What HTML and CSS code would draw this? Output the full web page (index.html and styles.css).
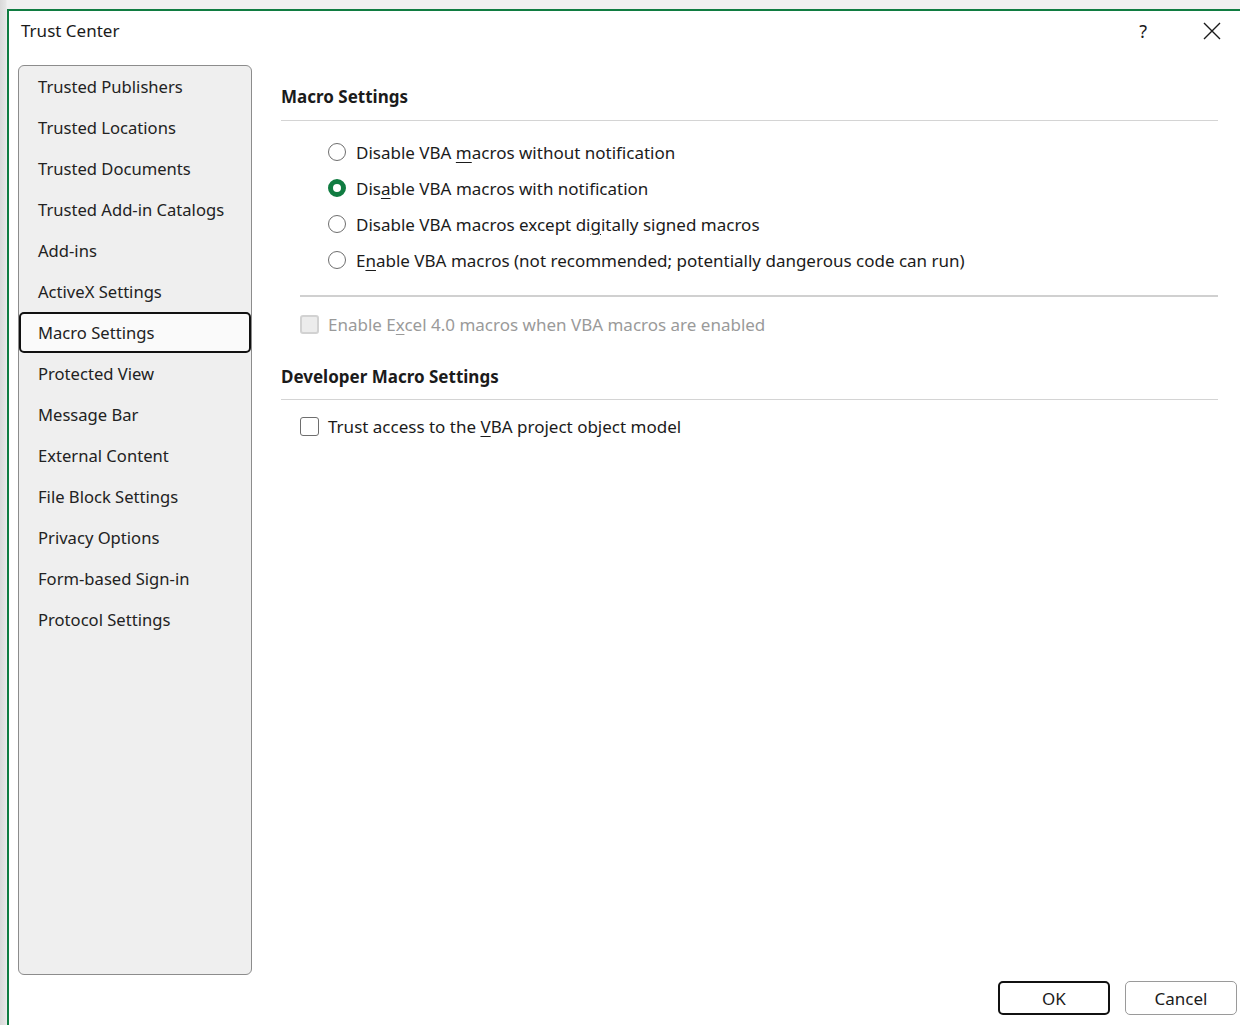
FILE: index.html
```html
<!DOCTYPE html>
<html lang="en">
<head>
    <meta charset="UTF-8">
    <title>Trust Center</title>
    <link rel="stylesheet" href="styles.css">
</head>
<body>

<div class="dialog">
    <div class="titlebar">
        <div class="title">Trust Center</div>
        <div class="title-buttons">
            <span class="help">?</span>
            <svg class="close" width="18" height="18" viewBox="0 0 18 18">
                <path d="M1 1 L17 17 M17 1 L1 17" stroke="#1a1a1a" stroke-width="1.4" fill="none"/>
            </svg>
        </div>
    </div>

    <div class="content">
        <ul class="nav">
            <li>Trusted Publishers</li>
            <li>Trusted Locations</li>
            <li>Trusted Documents</li>
            <li>Trusted Add-in Catalogs</li>
            <li>Add-ins</li>
            <li>ActiveX Settings</li>
            <li class="active">Macro Settings</li>
            <li>Protected View</li>
            <li>Message Bar</li>
            <li>External Content</li>
            <li>File Block Settings</li>
            <li>Privacy Options</li>
            <li>Form-based Sign-in</li>
            <li>Protocol Settings</li>
        </ul>

        <div class="main">
            <h3 class="section-title">Macro Settings</h3>
            <div class="radios">
                <div class="option"><span class="radio"></span><span>Disable VBA <u>m</u>acros without notification</span></div>
                <div class="option"><span class="radio checked"></span><span>Dis<u>a</u>ble VBA macros with notification</span></div>
                <div class="option"><span class="radio"></span><span>Disable VBA macros except di<u>g</u>itally signed macros</span></div>
                <div class="option"><span class="radio"></span><span>E<u>n</u>able VBA macros (not recommended; potentially dangerous code can run)</span></div>
            </div>
            <div class="divider"></div>
            <div class="check-row disabled"><span class="checkbox"></span><span>Enable E<u>x</u>cel 4.0 macros when VBA macros are enabled</span></div>

            <h3 class="section-title dev">Developer Macro Settings</h3>
            <div class="check-row trust"><span class="checkbox"></span><span>Trust access to the <u>V</u>BA project object model</span></div>
        </div>
    </div>

    <div class="footer">
        <button class="btn default">OK</button>
        <button class="btn">Cancel</button>
    </div>
</div>

</body>
</html>
```

FILE: styles.css
```css
* {
    margin: 0;
    padding: 0;
    box-sizing: border-box;
    font-family: 'Noto Sans', 'Open Sans', sans-serif;
}
body {
    width: 1240px;
    height: 1025px;
    overflow: hidden;
    background: #f0f0f0;
    background-image: linear-gradient(to right, #d9d9d9 0, #e6e6e6 6px, #f0f0f0 7px);
    color: #1b1b1b;
}
.dialog {
    margin: 9px 0 0 7px;
    height: 1016px;
    border-top: 2px solid #107c41;
    border-left: 2px solid #107c41;
    background: #fff;
    display: flex;
    flex-direction: column;
}
.titlebar {
    flex-shrink: 0;
    height: 44px;
    display: flex;
    justify-content: space-between;
    align-items: center;
    padding: 0 0 0 12px;
}
.title {
    font-size: 17px;
    margin-top: -5px;
}
.title-buttons {
    display: flex;
    align-items: center;
    margin-top: -4px;
}
.help {
    font-size: 18px;
    margin-right: 56px;
}
.close {
    margin-right: 19px;
}
.content {
    flex-shrink: 0;
    display: flex;
    height: 920px;
    padding-top: 10px;
}
.nav {
    list-style: none;
    margin-left: 9px;
    width: 234px;
    height: 910px;
    background: #efefef;
    border: 1px solid #8c8c8c;
    border-radius: 6px;
}
.nav li {
    height: 41px;
    line-height: 41px;
    padding-left: 19px;
    font-size: 16.6px;
    color: #222;
}
.nav li.active {
    background: #fafafa;
    border: 2px solid #111;
    border-radius: 5px;
    line-height: 37px;
    padding-left: 17px;
}
.main {
    flex: 1;
    margin-left: 29px;
    margin-right: 22px;
    padding-top: 20px;
}
.section-title {
    font-size: 17px;
    font-weight: bold;
    height: 36px;
    line-height: 24px;
    border-bottom: 1px solid #d4d4d4;
}
.radios {
    padding: 13px 0 0 47px;
}
.option {
    display: flex;
    align-items: center;
    height: 36px;
    font-size: 17px;
}
.radio {
    flex-shrink: 0;
    width: 18px;
    height: 18px;
    border: 1.5px solid #6e6e6e;
    border-radius: 50%;
    margin-right: 10px;
    background: #fff;
}
.radio.checked {
    border: 5px solid #107c41;
}
u {
    text-decoration-thickness: 1px;
    text-underline-offset: 3px;
}
.divider {
    margin: 17px 0 0 19px;
    height: 2px;
    background: #d0d0d0;
}
.check-row {
    display: flex;
    align-items: center;
    height: 36px;
    margin-left: 19px;
    font-size: 17px;
}
.check-row.disabled {
    margin-top: 9px;
    color: #9a9a9a;
}
.checkbox {
    flex-shrink: 0;
    width: 19px;
    height: 19px;
    border: 1.5px solid #6e6e6e;
    border-radius: 3px;
    margin-right: 9px;
    background: #fff;
}
.disabled .checkbox {
    border: 2px solid #d2d2d2;
    background: #ececec;
}
.section-title.dev {
    margin-top: 23px;
    height: 35px;
}
.check-row.trust {
    margin-top: 8px;
}
.footer {
    flex-shrink: 0;
    display: flex;
    justify-content: flex-end;
    gap: 15px;
    padding-top: 6px;
    padding-right: 3px;
}
.btn {
    width: 112px;
    height: 34px;
    font-size: 17px;
    background: #fff;
    border: 1px solid #9a9a9a;
    border-radius: 5px;
    color: #1b1b1b;
}
.btn.default {
    border: 2px solid #111;
}
```
